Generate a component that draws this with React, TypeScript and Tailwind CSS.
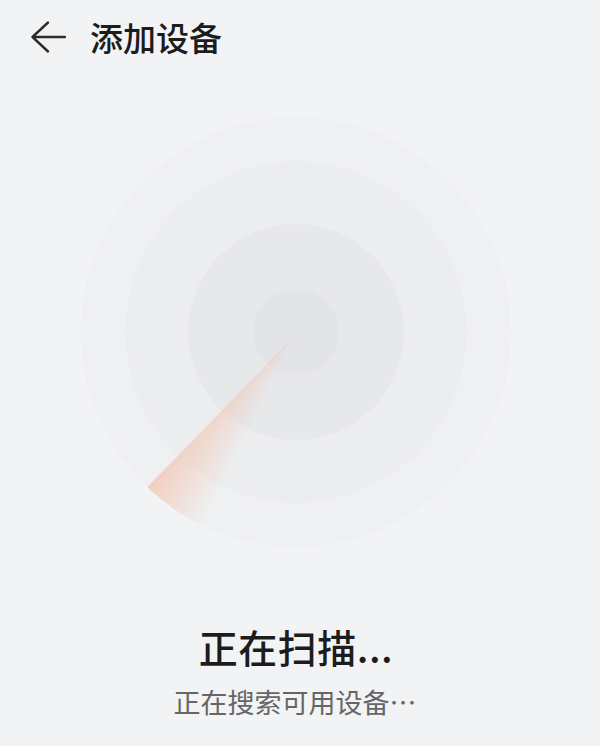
export default function App() {
  return (
    <div className="w-[600px] min-h-[746px] bg-[#f2f3f5] flex flex-col font-['Noto_Sans_CJK_SC','Noto_Sans',sans-serif]">
      {/* header */}
      <div className="flex items-center h-[74px] pl-[31px] gap-[24px]">
        <svg width="35" height="32" viewBox="0 0 35 32" fill="none">
          <path
            d="M1.5 16 H34 M1.5 16 L17 1.5 M1.5 16 L17 30.5"
            stroke="#2b2b2b"
            strokeWidth="2.4"
            strokeLinecap="round"
            strokeLinejoin="round"
          />
        </svg>
        <span className="text-[33px] leading-none font-medium text-[#1c1c1c]">添加设备</span>
      </div>

      {/* radar */}
      <div className="relative mt-[43px] ml-[81px] w-[430px] h-[430px]">
        <div className="w-full h-full rounded-full bg-[#eff0f2] flex items-center justify-center">
          <div className="w-[342px] h-[342px] rounded-full bg-[#ecedef] flex items-center justify-center">
            <div className="w-[216px] h-[216px] rounded-full bg-[#e7e8ea] flex items-center justify-center">
              <div className="w-[86px] h-[86px] rounded-full bg-[#e3e4e7]" />
            </div>
          </div>
        </div>
        <div className="absolute inset-0 rounded-full bg-[conic-gradient(from_0deg_at_49.5%_51%,transparent_0deg,transparent_206deg,rgba(242,192,168,0.75)_224deg,transparent_224.3deg)] [mask-image:radial-gradient(circle_at_49.5%_51%,rgba(0,0,0,0.35),black_75%)]" />
      </div>

      {/* status */}
      <div className="mt-[80px] pr-[8px] text-center text-[39px] leading-none font-medium text-[#1c1c1c] tracking-[0.5px]">
        正在扫描...
      </div>
      <div className="mt-[22px] pr-[10px] text-center text-[27px] leading-none text-[#666666]">
        正在搜索可用设备⋯
      </div>
    </div>
  );
}
